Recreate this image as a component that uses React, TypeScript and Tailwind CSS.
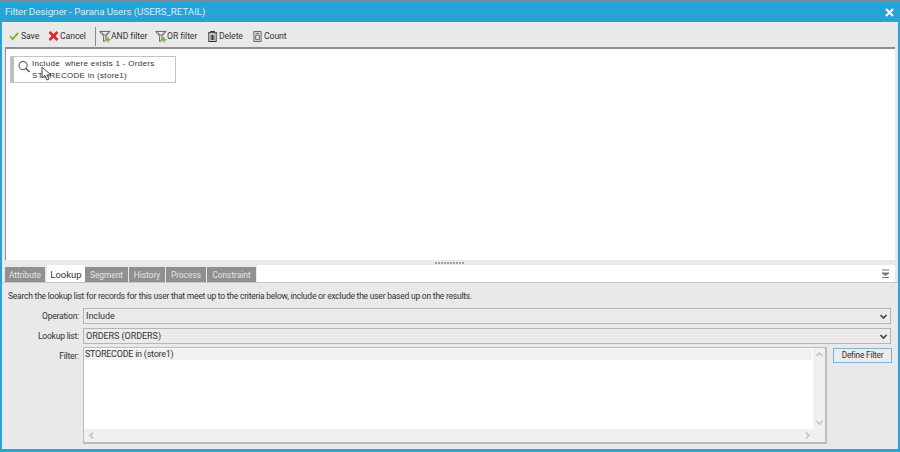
import React from "react";

const font = { fontFamily: 'Roboto, "Liberation Sans", Arial, sans-serif' };

function FilterIcon() {
  return (
    <svg width="12" height="13" viewBox="0 0 13 14" className="shrink-0">
      <path d="M0.5 1.5h12M1 2l4 4.5v6l2.5-1.5V6.5l4-4.5M3 2.5l2.8 3h1.4l2.8-3" fill="none" stroke="#5a5a5a" strokeWidth="1" />
      <path d="M9.5 7.5v6M6.5 10.5h6" stroke="#6ab92e" strokeWidth="1.6" />
    </svg>
  );
}

function Tool({ icon, label, className = "" }: { icon: React.ReactNode; label: string; className?: string }) {
  return (
    <div className={`flex items-center text-[8.7px] tracking-[-0.1px] text-[#333] ${className}`}>
      {icon}
      <span>{label}</span>
    </div>
  );
}

function Chevron({ dir, className = "" }: { dir: "up" | "down" | "left" | "right"; className?: string }) {
  const d = { up: "M1.5 6l3-3 3 3", down: "M1.5 3l3 3 3-3", left: "M6 1.5l-3 3 3 3", right: "M3 1.5l3 3-3 3" }[dir];
  return (
    <svg width="9" height="9" viewBox="0 0 9 9" className={className}>
      <path d={d} fill="none" stroke="currentColor" strokeWidth="1.7" />
    </svg>
  );
}

function SelectBox({ text }: { text: string }) {
  return (
    <div className="flex h-[16px] flex-1 items-center justify-between border border-[#b5b5b5] bg-[#ebebeb] pl-[2px] pr-[2px] text-[9px] tracking-[-0.05px] text-[#333]">
      <span className="pt-[1px]">{text}</span>
      <Chevron dir="down" className="text-[#444]" />
    </div>
  );
}

const tabs = ["Attribute", "Lookup", "Segment", "History", "Process", "Constraint"];
const widths = ["w-[40px]", "w-[38px]", "w-[43px]", "w-[36px]", "w-[40px]", "w-[49px]"];

export default function App() {
  return (
    <div style={font} className="flex h-[452px] w-[900px] flex-col overflow-hidden bg-[#e9e9e9]">
      <div className="h-[1px] bg-[#7f8c92]" />
      <div className="flex h-[21px] items-center justify-between bg-[#27a3d6] pl-[5px] pr-[6px] pt-[1px] text-[9.9px] tracking-[-0.1px] text-[#d4eef8]">
        <span>Filter Designer - Parana Users (USERS_RETAIL)</span>
        <svg width="9" height="9" viewBox="0 0 9 9">
          <path d="M1 1l7 7M8 1L1 8" stroke="#fff" strokeWidth="2" />
        </svg>
      </div>
      <div className="flex min-h-0 flex-1 flex-col border-x-2 border-b-[3px] border-[#27a3d6]">
        <div className="flex h-[25px] shrink-0 items-center pl-[7px] pt-[4px]">
          <Tool
            label="Save"
            className="w-[39px] gap-[2px]"
            icon={
              <svg width="10" height="10" viewBox="0 0 11 10">
                <path d="M1 5l3 3.5L10 1.5" fill="none" stroke="#6ab92e" strokeWidth="2" />
              </svg>
            }
          />
          <Tool
            label="Cancel"
            className="w-[47px] gap-[1px]"
            icon={
              <svg width="11" height="10" viewBox="0 0 10 10">
                <path d="M1 1l8 8M9 1l-8 8" stroke="#e0242a" strokeWidth="2.6" />
              </svg>
            }
          />
          <div className="mr-[3px] h-[19px] w-[1px] bg-[#8a8a8a]" />
          <Tool label="AND filter" className="w-[56px]" icon={<FilterIcon />} />
          <Tool label="OR filter" className="w-[52px]" icon={<FilterIcon />} />
          <Tool
            label="Delete"
            className="w-[46px] gap-[1px]"
            icon={
              <svg width="11" height="13" viewBox="0 0 12 13">
                <path d="M1 2.5h10M4 2.5V1h4v1.5M2 3v9h8V3M4.5 4.5v6M6 4.5v6M7.5 4.5v6" fill="none" stroke="#333" strokeWidth="1.1" />
              </svg>
            }
          />
          <Tool
            label="Count"
            className="gap-[2px]"
            icon={
              <svg width="9" height="13" viewBox="0 0 10 13">
                <path d="M1 1h8v11H1zM3 3h4M3 5h4v5H3z" fill="none" stroke="#555" strokeWidth="1" />
              </svg>
            }
          />
        </div>
        <div className="mx-[3px] h-[213px] shrink-0 border-t-2 border-l border-[#8e8e8e] bg-white pl-[4px] pt-[7px]">
          <div className="relative flex h-[27px] w-[166px] border border-[#c4c4c4] bg-white">
            <div className="w-[3px] bg-[#bdbdbd]" />
            <svg width="12" height="13" viewBox="0 0 13 13" className="ml-[4px] mt-[3px] shrink-0">
              <circle cx="5.5" cy="5.5" r="4.4" fill="none" stroke="#555" strokeWidth="1.1" />
              <path d="M8.5 8.5l4 4" stroke="#444" strokeWidth="1.4" />
            </svg>
            <div className="ml-[2px] pt-[1px] font-['Liberation_Sans'] text-[8px] leading-[12px] tracking-[0.3px] text-[#333]">
              <div className="whitespace-pre">Include  where exists 1 - Orders</div>
              <div>STORECODE in (store1)</div>
            </div>
            <svg width="12" height="16" viewBox="0 0 12 16" className="absolute left-[30px] top-[9px]">
              <path d="M1 1v11l3-2.5L6 14l2-1-2-4h4z" fill="#fff" stroke="#444" strokeWidth="1" />
            </svg>
          </div>
        </div>
        <div className="flex h-[5px] shrink-0 items-center justify-center">
          <div className="h-[2px] w-[30px] bg-[repeating-linear-gradient(90deg,#a0a0a0_0_2px,transparent_2px_3px)]" />
        </div>
        <div className="mx-[3px] flex h-[17px] shrink-0 items-stretch">
          {tabs.map((t, i) => (
            <div
              key={t}
              className={`${widths[i]} flex items-center justify-center ${
                t === "Lookup" ? "ml-[1px] bg-white pt-[3px] text-[9.5px] text-[#333]" : "mr-[1px] mt-[2px] bg-[#8f8f8f] pt-[1px] text-[8.3px] text-[#e6e6e6]"
              }`}
            >
              {t}
            </div>
          ))}
          <div className="flex flex-1 items-center justify-end bg-white pr-[5px]">
            <svg width="9" height="10" viewBox="0 0 9 10">
              <path d="M1 1h7M1 4l3.5 2.5L8 4zM1 8.5h7" fill="#777" stroke="#777" strokeWidth="1" />
            </svg>
          </div>
        </div>
        <div className="h-[1px] shrink-0 bg-[#c8c8c8]" />
        <div className="flex min-h-0 flex-1 flex-col pl-[6px] pr-[6px]">
          <div className="mt-[6px] h-[14px] whitespace-nowrap text-[8.5px] leading-[14px] tracking-[-0.23px] text-[#333]">
            Search the lookup list for records for this user that meet up to the criteria below, include or exclude the user based up on the results.
          </div>
          <div className="mt-[5px] flex items-center">
            <span className="w-[75px] pr-[4px] pt-[1px] text-right text-[8.5px] tracking-[-0.2px] text-[#333]">Operation:</span>
            <div className="mr-[1px] flex flex-1">
              <SelectBox text="Include" />
            </div>
          </div>
          <div className="mt-[4px] flex items-center">
            <span className="w-[75px] pr-[4px] pt-[1px] text-right text-[8.5px] tracking-[-0.2px] text-[#333]">Lookup list:</span>
            <div className="mr-[1px] flex flex-1">
              <SelectBox text="ORDERS (ORDERS)" />
            </div>
          </div>
          <div className="mt-[3px] flex min-h-0 flex-1 pb-[5px]">
            <span className="w-[75px] pr-[4px] pt-[3px] text-right text-[8.5px] tracking-[-0.2px] text-[#333]">Filter:</span>
            <div className="flex w-[745px] flex-col border border-[#bcbcbc] border-b-2 border-r-2 bg-white">
              <div className="flex min-h-0 flex-1">
                <div className="flex-1 pt-[1px]">
                  <div className="mr-[1px] flex h-[11px] items-center bg-[#f1f1f1] pl-[1px] pt-[1px] text-[9px] tracking-[-0.25px] text-[#333]">STORECODE in (store1)</div>
                </div>
                <div className="flex w-[12px] flex-col items-center justify-between bg-[#f0f0f0] py-[2px] text-[#c4c4c4]">
                  <Chevron dir="up" />
                  <Chevron dir="down" />
                </div>
              </div>
              <div className="flex h-[13px] shrink-0 items-center justify-between bg-[#f0f0f0] pl-[3px] pr-[13px] text-[#c4c4c4]">
                <Chevron dir="left" />
                <Chevron dir="right" />
              </div>
            </div>
            <button className="ml-[6px] mt-[1px] h-[15px] w-[59px] border border-[#7ab4dc] bg-[#ececec] text-[8.3px] tracking-[-0.2px] text-[#333]">Define Filter</button>
          </div>
        </div>
      </div>
    </div>
  );
}
